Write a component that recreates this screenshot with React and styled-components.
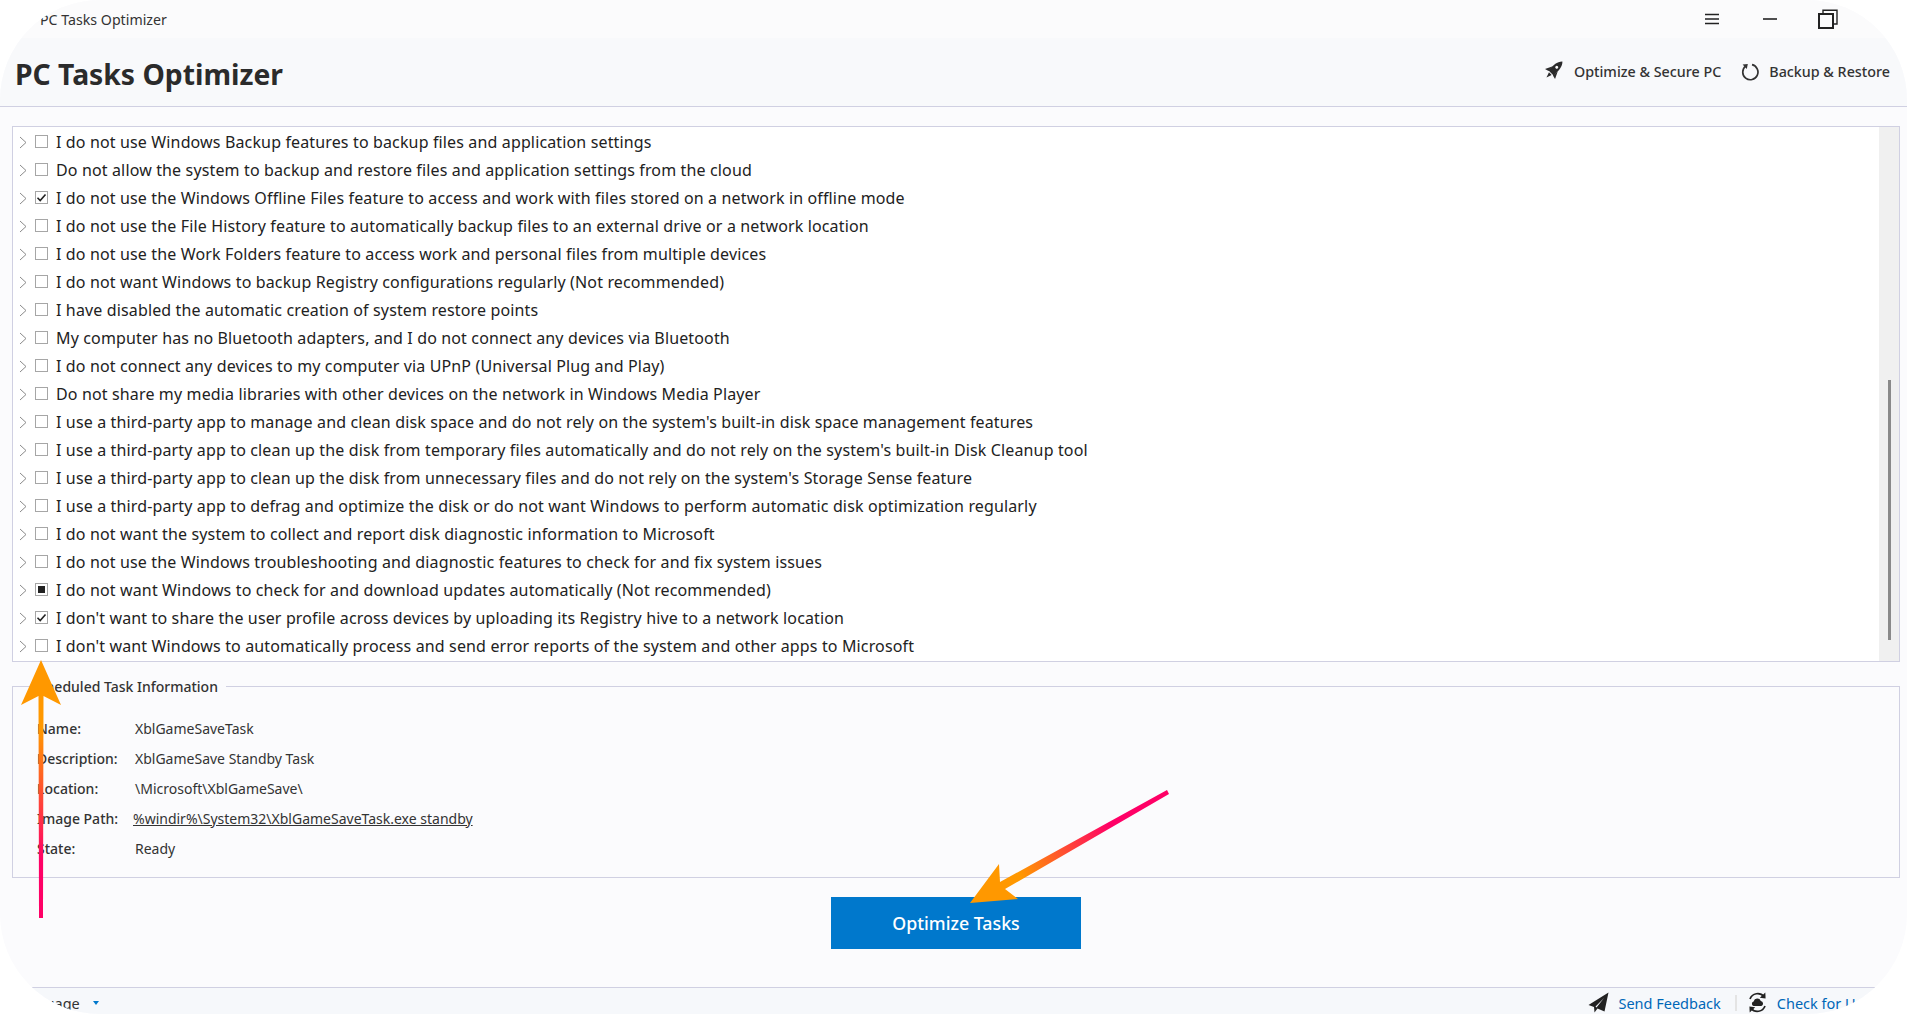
import React from "react";
import styled, { createGlobalStyle } from "styled-components";

const tasks = [
  { text: "I do not use Windows Backup features to backup files and application settings" },
  { text: "Do not allow the system to backup and restore files and application settings from the cloud" },
  { text: "I do not use the Windows Offline Files feature to access and work with files stored on a network in offline mode", state: "checked" },
  { text: "I do not use the File History feature to automatically backup files to an external drive or a network location" },
  { text: "I do not use the Work Folders feature to access work and personal files from multiple devices" },
  { text: "I do not want Windows to backup Registry configurations regularly (Not recommended)" },
  { text: "I have disabled the automatic creation of system restore points" },
  { text: "My computer has no Bluetooth adapters, and I do not connect any devices via Bluetooth" },
  { text: "I do not connect any devices to my computer via UPnP (Universal Plug and Play)" },
  { text: "Do not share my media libraries with other devices on the network in Windows Media Player" },
  { text: "I use a third-party app to manage and clean disk space and do not rely on the system's built-in disk space management features" },
  { text: "I use a third-party app to clean up the disk from temporary files automatically and do not rely on the system's built-in Disk Cleanup tool" },
  { text: "I use a third-party app to clean up the disk from unnecessary files and do not rely on the system's Storage Sense feature" },
  { text: "I use a third-party app to defrag and optimize the disk or do not want Windows to perform automatic disk optimization regularly" },
  { text: "I do not want the system to collect and report disk diagnostic information to Microsoft" },
  { text: "I do not use the Windows troubleshooting and diagnostic features to check for and fix system issues" },
  { text: "I do not want Windows to check for and download updates automatically (Not recommended)", state: "mixed" },
  { text: "I don't want to share the user profile across devices by uploading its Registry hive to a network location", state: "checked" },
  { text: "I don't want Windows to automatically process and send error reports of the system and other apps to Microsoft" },
];

const info = [
  { label: "Name:", value: "XblGameSaveTask" },
  { label: "Description:", value: "XblGameSave Standby Task" },
  { label: "Location:", value: "\\Microsoft\\XblGameSave\\" },
  { label: "Image Path:", value: "%windir%\\System32\\XblGameSaveTask.exe standby", link: true },
  { label: "State:", value: "Ready" },
];

const CheckBox = ({ state }) => (
  <Box>
    {state === "checked" && (
      <svg width="11" height="11" viewBox="0 0 11 11">
        <path d="M1.5 5.8 L4.2 8.5 L9.5 2.5" fill="none" stroke="#222" strokeWidth="1.6" />
      </svg>
    )}
    {state === "mixed" && <MixedMark />}
  </Box>
);

const App = () => {
  return (
    <React.Fragment>
      <GlobalStyle />
      <Window>
        <TitleBar>
          <TitleText>PC Tasks Optimizer</TitleText>
          <TitleButtons>
            <svg width="14" height="12" viewBox="0 0 14 12">
              <path d="M0 1.5H14M0 6H14M0 10.5H14" stroke="#222" strokeWidth="1.6" />
            </svg>
            <svg width="14" height="12" viewBox="0 0 14 12">
              <path d="M0 6H14" stroke="#222" strokeWidth="1.6" />
            </svg>
            <RestoreIcon width="20" height="20" viewBox="0 0 20 20">
              <rect x="1" y="5" width="14" height="14" fill="none" stroke="#222" strokeWidth="2" />
              <path d="M5 4V1.2H19V15H16" fill="none" stroke="#222" strokeWidth="1.4" />
            </RestoreIcon>
          </TitleButtons>
        </TitleBar>

        <Header>
          <AppName>PC Tasks Optimizer</AppName>
          <HeaderLinks>
            <HeaderLink>
              <RocketIcon width="19" height="19" viewBox="0 0 19 19">
                <g transform="rotate(45 9.5 9.5)">
                  <path d="M9.5 -4.5 C13.2 -1 13.6 5 13 11.5 L6 11.5 C5.4 5 5.8 -1 9.5 -4.5 Z" fill="#2b2b2b" />
                  <path d="M6 5.5 L2.4 13 L6.4 12 Z M13 5.5 L16.6 13 L12.6 12 Z" fill="#2b2b2b" />
                  <path d="M7.6 12.6 H11.4 L9.5 18 Z" fill="#2b2b2b" />
                  <circle cx="9.5" cy="3.5" r="1.5" fill="#fff" />
                </g>
              </RocketIcon>
              Optimize &amp; Secure PC
            </HeaderLink>
            <HeaderLink>
              <svg width="18" height="18" viewBox="0 0 18 18">
                <path d="M4.6 3.2 A7.6 7.6 0 1 0 11 1.7" fill="none" stroke="#333" strokeWidth="1.7" />
                <path d="M1.6 1.4 L6.8 1 L5.8 6 Z" fill="#333" />
              </svg>
              Backup &amp; Restore
            </HeaderLink>
          </HeaderLinks>
        </Header>

        <Content>
          <TaskList>
            <Rows>
              {tasks.map((task) => (
                <Row key={task.text}>
                  <svg width="8" height="13" viewBox="0 0 8 13">
                    <path d="M1 1 L7 6.5 L1 12" fill="none" stroke="#8a8a8a" strokeWidth="1" />
                  </svg>
                  <CheckBox state={task.state} />
                  <RowText>{task.text}</RowText>
                </Row>
              ))}
            </Rows>
            <ScrollTrack>
              <ScrollThumb />
            </ScrollTrack>
          </TaskList>

          <InfoGroup>
            <InfoLegend>Scheduled Task Information</InfoLegend>
            {info.map((item) => (
              <InfoRow key={item.label}>
                <InfoLabel>{item.label}</InfoLabel>
                <InfoValue $link={item.link}>{item.value}</InfoValue>
              </InfoRow>
            ))}
          </InfoGroup>

          <ButtonRow>
            <PrimaryButton>Optimize Tasks</PrimaryButton>
          </ButtonRow>
        </Content>

        <Footer>
          <Language>
            Language
            <Caret />
          </Language>
          <FooterLinks>
            <FooterLink>
              <svg width="21" height="21" viewBox="0 0 21 21">
                <path d="M20.5 0.5 L0.5 13 L6 15 L6.5 20.5 L9.5 16.5 L16.5 19.5 Z M7.5 14.5 L16 6 L8.5 15.5 Z" fill="#222" fillRule="evenodd" />
              </svg>
              Send Feedback
            </FooterLink>
            <FooterDivider />
            <FooterLink>
              <svg width="21" height="21" viewBox="0 0 21 21">
                <path d="M3 7 A8.2 8.2 0 0 1 17 4.6" fill="none" stroke="#222" strokeWidth="1.7" />
                <path d="M18.3 0.6 L18.6 6.6 L12.8 5.8 Z" fill="#222" />
                <path d="M18 14 A8.2 8.2 0 0 1 4 16.4" fill="none" stroke="#222" strokeWidth="1.7" />
                <path d="M2.7 20.4 L2.4 14.4 L8.2 15.2 Z" fill="#222" />
                <path d="M6.6 14 A2.4 2.4 0 0 1 6.6 9.4 A3.8 3.8 0 0 1 13.8 9 A2.6 2.6 0 0 1 14.4 14 Z" fill="#222" />
              </svg>
              Check for Updates
            </FooterLink>
          </FooterLinks>
        </Footer>

        <Annotations width="1907" height="1014" viewBox="0 0 1907 1014">
          <defs>
            <linearGradient id="upArrow" gradientUnits="userSpaceOnUse" x1="41" y1="730" x2="41" y2="860">
              <stop offset="0" stopColor="#ff9800" />
              <stop offset="1" stopColor="#ff0066" />
            </linearGradient>
            <linearGradient id="sideArrow" gradientUnits="userSpaceOnUse" x1="1020" y1="875" x2="1110" y2="825">
              <stop offset="0" stopColor="#ff9800" />
              <stop offset="1" stopColor="#ff0066" />
            </linearGradient>
          </defs>
          <path
            d="M41 660 L61 705 L43.5 696 L43 918 L39 918 L38.5 696 L21 705 Z"
            fill="url(#upArrow)"
          />
          <path
            d="M970 903 L999 864 L1000 882 L1167 790 L1169 794 L1005 889 L1018 899 Z"
            fill="url(#sideArrow)"
          />
        </Annotations>
      </Window>
    </React.Fragment>
  );
};

const GlobalStyle = createGlobalStyle`
  html, body {
    margin: 0;
    padding: 0;
    background: #ffffff;
    overflow: hidden;
  }
  * {
    box-sizing: border-box;
  }
`;

const Window = styled.div`
  position: relative;
  width: 1907px;
  height: 1014px;
  border-radius: 100px;
  overflow: hidden;
  display: flex;
  flex-direction: column;
  background: #fbfbfd;
  color: #222;
  font-family: "Noto Sans", "Open Sans", sans-serif;
`;

const TitleBar = styled.div`
  height: 38px;
  flex: none;
  display: flex;
  align-items: center;
  justify-content: space-between;
  padding: 0 69px 0 40px;
  background: #fbfbfc;
`;

const TitleText = styled.div`
  font-size: 14.2px;
  color: #333;
`;

const TitleButtons = styled.div`
  display: flex;
  align-items: center;
  gap: 44px;
`;

const RestoreIcon = styled.svg`
  margin-left: -3px;
`;

const Header = styled.div`
  height: 69px;
  flex: none;
  display: flex;
  align-items: center;
  justify-content: space-between;
  padding: 3px 17px 0 15px;
  background: #f8f9fb;
  border-bottom: 1px solid #d0d0e2;
`;

const AppName = styled.h1`
  margin: 0;
  font-size: 28.3px;
  font-weight: 700;
  color: #2b2b2b;
`;

const HeaderLinks = styled.div`
  display: flex;
  align-items: center;
  gap: 20px;
  padding-bottom: 4px;
`;

const HeaderLink = styled.div`
  display: flex;
  align-items: center;
  gap: 10px;
  font-size: 14.3px;
  font-weight: 500;
  color: #333;
`;

const RocketIcon = styled.svg`
  overflow: visible;
  margin-right: 2px;
`;

const Content = styled.div`
  flex: 1;
  display: flex;
  flex-direction: column;
  padding: 19px 7px 0 12px;
`;

const TaskList = styled.div`
  height: 536px;
  flex: none;
  display: flex;
  background: #ffffff;
  border: 1px solid #d0d0e2;
`;

const Rows = styled.div`
  flex: 1;
  padding-top: 1px;
`;

const Row = styled.div`
  height: 28px;
  display: flex;
  align-items: center;
  padding-left: 6px;
`;

const Box = styled.span`
  width: 13px;
  height: 13px;
  margin: 0 0 1px 8px;
  flex: none;
  display: flex;
  align-items: center;
  justify-content: center;
  background: #fff;
  border: 1px solid #a6a6a6;
`;

const MixedMark = styled.span`
  width: 7px;
  height: 7px;
  background: #222;
`;

const RowText = styled.span`
  margin-left: 8px;
  font-size: 16px;
  letter-spacing: 0.14px;
  white-space: nowrap;
  color: #222;
`;

const ScrollTrack = styled.div`
  width: 20px;
  flex: none;
  padding-top: 253px;
  display: flex;
  justify-content: center;
  background: #f0f0f0;
`;

const ScrollThumb = styled.div`
  width: 3px;
  height: 260px;
  background: #8a8a8a;
`;

const InfoGroup = styled.fieldset`
  margin: 15px 0 0;
  padding: 17px 0 0 24px;
  height: 201px;
  flex: none;
  border: 1px solid #d0d0e2;
  min-width: 0;
`;

const InfoLegend = styled.legend`
  margin: 0 0 0 -6px;
  padding: 0 8px 0 0;
  font-size: 14px;
  font-weight: 500;
  color: #333;
`;

const InfoRow = styled.div`
  height: 30px;
  display: flex;
  align-items: center;
  font-size: 14px;
`;

const InfoLabel = styled.span`
  width: 98px;
  font-weight: 500;
  color: #333;
`;

const InfoValue = styled.span`
  color: #333;
  margin-left: ${(props) => (props.$link ? "-2px" : "0")};
  text-decoration: ${(props) => (props.$link ? "underline" : "none")};
`;

const ButtonRow = styled.div`
  display: flex;
  justify-content: center;
  padding: 19px 0 0 0;
`;

const PrimaryButton = styled.button`
  width: 250px;
  height: 52px;
  border: none;
  background: #0078cc;
  color: #ffffff;
  font-family: inherit;
  font-size: 17.8px;
  font-weight: 500;
`;

const Footer = styled.div`
  height: 27px;
  flex: none;
  display: flex;
  align-items: flex-start;
  justify-content: space-between;
  padding: 4px 5px 0 12px;
  background: #f6f8fb;
  border-top: 1px solid #d0d0e2;
`;

const Language = styled.div`
  display: flex;
  align-items: center;
  margin-top: 1px;
  font-size: 14.5px;
  color: #333;
`;

const Caret = styled.span`
  margin-left: 13px;
  border-left: 3px solid transparent;
  border-right: 3px solid transparent;
  border-top: 4px solid #0078cc;
`;

const FooterLinks = styled.div`
  display: flex;
  align-items: center;
`;

const FooterLink = styled.div`
  display: flex;
  align-items: center;
  gap: 9px;
  font-size: 14.5px;
  white-space: nowrap;
  color: #0067b8;
`;

const FooterDivider = styled.span`
  width: 2px;
  height: 16px;
  margin: 0 10px 0 14px;
  background: #e4e4e4;
`;

const Annotations = styled.svg`
  position: absolute;
  left: 0;
  top: 0;
  pointer-events: none;
`;

export default App;
